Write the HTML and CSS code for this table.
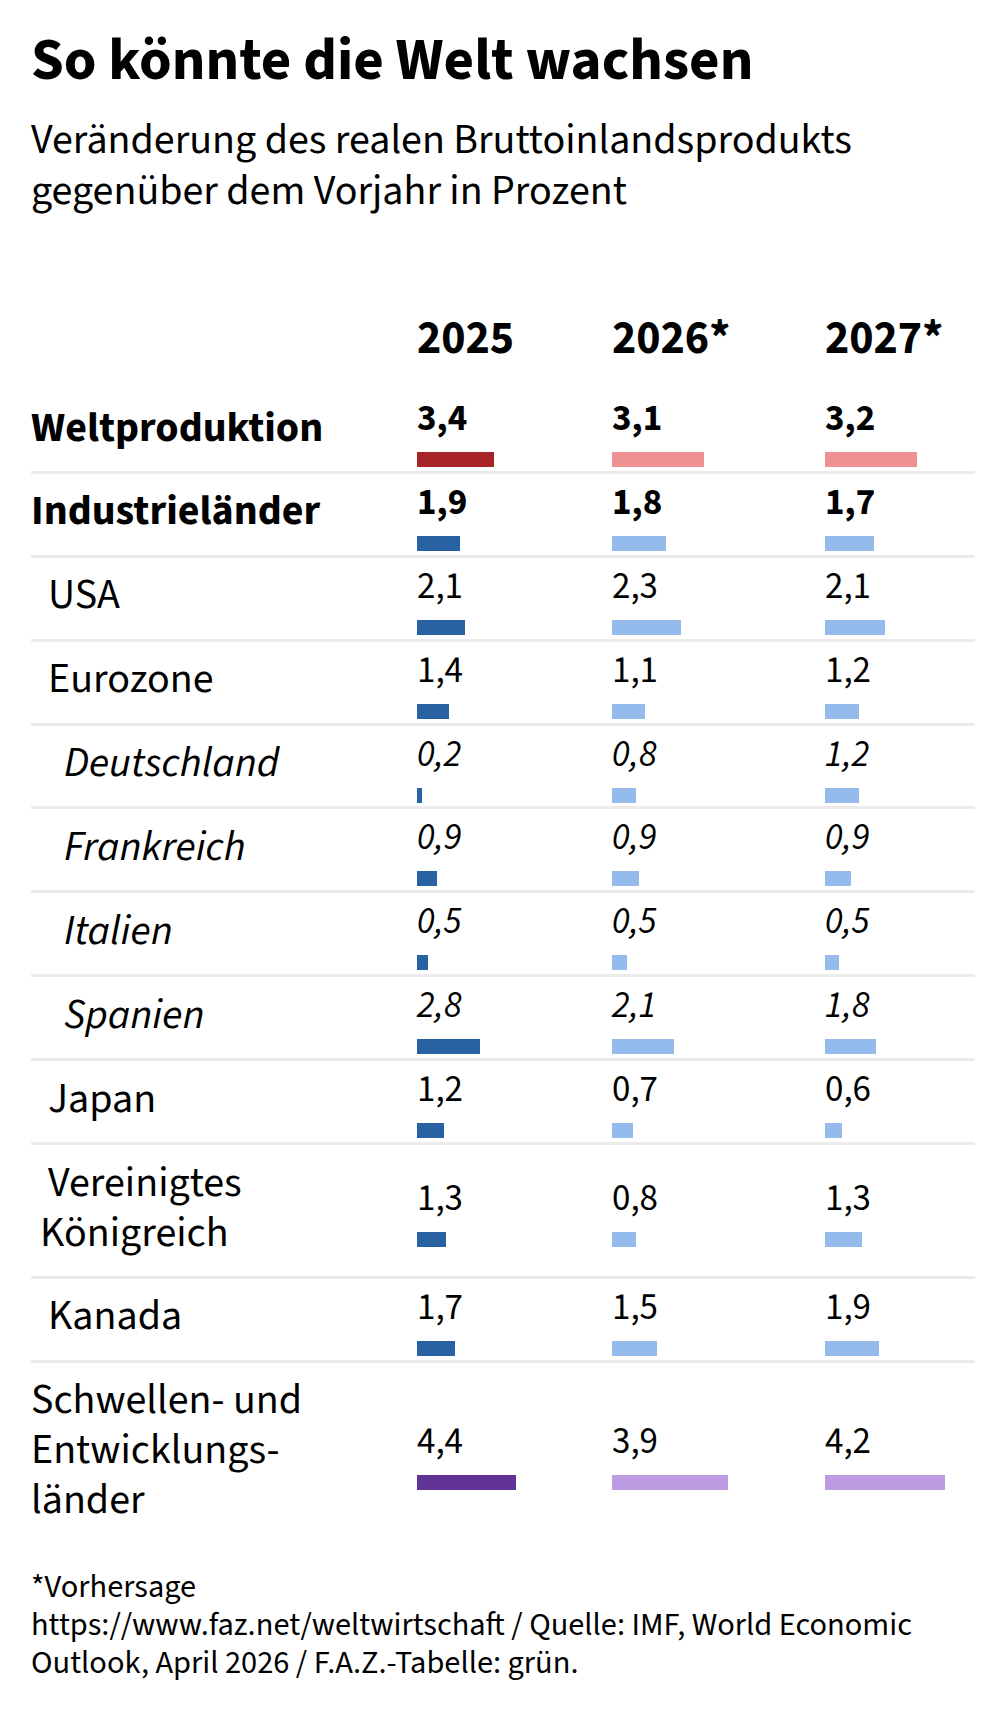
FILE: index.html
```html
<!DOCTYPE html>
<html lang="de">
<head>
<meta charset="utf-8">
<title>So könnte die Welt wachsen</title>
<link rel="stylesheet" href="styles.css">
</head>
<body>
<main class="chart">
  <h1 class="title">So könnte die Welt wachsen</h1>
  <p class="subtitle">Veränderung des realen Bruttoinlandsprodukts gegenüber dem Vorjahr in Prozent</p>

  <div class="table">
    <div class="row head">
      <div class="label"></div>
      <div class="year">2025</div>
      <div class="year">2026*</div>
      <div class="year">2027*</div>
    </div>

    <div class="row bold">
      <div class="label">Weltproduktion</div>
      <div class="val"><div class="num">3,4</div><div class="bar red-d" style="width:77px"></div></div>
      <div class="val"><div class="num">3,1</div><div class="bar red-l" style="width:92px"></div></div>
      <div class="val"><div class="num">3,2</div><div class="bar red-l" style="width:92px"></div></div>
    </div>

    <div class="row bold">
      <div class="label">Industrieländer</div>
      <div class="val"><div class="num">1,9</div><div class="bar blue-d" style="width:43px"></div></div>
      <div class="val"><div class="num">1,8</div><div class="bar blue-l" style="width:54px"></div></div>
      <div class="val"><div class="num">1,7</div><div class="bar blue-l" style="width:49px"></div></div>
    </div>

    <div class="row">
      <div class="label lvl1">USA</div>
      <div class="val"><div class="num">2,1</div><div class="bar blue-d" style="width:48px"></div></div>
      <div class="val"><div class="num">2,3</div><div class="bar blue-l" style="width:69px"></div></div>
      <div class="val"><div class="num">2,1</div><div class="bar blue-l" style="width:60px"></div></div>
    </div>

    <div class="row">
      <div class="label lvl1">Eurozone</div>
      <div class="val"><div class="num">1,4</div><div class="bar blue-d" style="width:32px"></div></div>
      <div class="val"><div class="num">1,1</div><div class="bar blue-l" style="width:33px"></div></div>
      <div class="val"><div class="num">1,2</div><div class="bar blue-l" style="width:34px"></div></div>
    </div>

    <div class="row ital">
      <div class="label lvl2">Deutschland</div>
      <div class="val"><div class="num">0,2</div><div class="bar blue-d" style="width:5px"></div></div>
      <div class="val"><div class="num">0,8</div><div class="bar blue-l" style="width:24px"></div></div>
      <div class="val"><div class="num">1,2</div><div class="bar blue-l" style="width:34px"></div></div>
    </div>

    <div class="row ital">
      <div class="label lvl2">Frankreich</div>
      <div class="val"><div class="num">0,9</div><div class="bar blue-d" style="width:20px"></div></div>
      <div class="val"><div class="num">0,9</div><div class="bar blue-l" style="width:27px"></div></div>
      <div class="val"><div class="num">0,9</div><div class="bar blue-l" style="width:26px"></div></div>
    </div>

    <div class="row ital">
      <div class="label lvl2">Italien</div>
      <div class="val"><div class="num">0,5</div><div class="bar blue-d" style="width:11px"></div></div>
      <div class="val"><div class="num">0,5</div><div class="bar blue-l" style="width:15px"></div></div>
      <div class="val"><div class="num">0,5</div><div class="bar blue-l" style="width:14px"></div></div>
    </div>

    <div class="row ital">
      <div class="label lvl2">Spanien</div>
      <div class="val"><div class="num">2,8</div><div class="bar blue-d" style="width:63px"></div></div>
      <div class="val"><div class="num">2,1</div><div class="bar blue-l" style="width:62px"></div></div>
      <div class="val"><div class="num">1,8</div><div class="bar blue-l" style="width:51px"></div></div>
    </div>

    <div class="row">
      <div class="label lvl1">Japan</div>
      <div class="val"><div class="num">1,2</div><div class="bar blue-d" style="width:27px"></div></div>
      <div class="val"><div class="num">0,7</div><div class="bar blue-l" style="width:21px"></div></div>
      <div class="val"><div class="num">0,6</div><div class="bar blue-l" style="width:17px"></div></div>
    </div>

    <div class="row">
      <div class="label lvl1">Vereinigtes<br>Königreich</div>
      <div class="val"><div class="num">1,3</div><div class="bar blue-d" style="width:29px"></div></div>
      <div class="val"><div class="num">0,8</div><div class="bar blue-l" style="width:24px"></div></div>
      <div class="val"><div class="num">1,3</div><div class="bar blue-l" style="width:37px"></div></div>
    </div>

    <div class="row">
      <div class="label lvl1">Kanada</div>
      <div class="val"><div class="num">1,7</div><div class="bar blue-d" style="width:38px"></div></div>
      <div class="val"><div class="num">1,5</div><div class="bar blue-l" style="width:45px"></div></div>
      <div class="val"><div class="num">1,9</div><div class="bar blue-l" style="width:54px"></div></div>
    </div>

    <div class="row last">
      <div class="label">Schwellen- und<br>Entwicklungs-<br>länder</div>
      <div class="val"><div class="num">4,4</div><div class="bar purple-d" style="width:99px"></div></div>
      <div class="val"><div class="num">3,9</div><div class="bar purple-l" style="width:116px"></div></div>
      <div class="val"><div class="num">4,2</div><div class="bar purple-l" style="width:120px"></div></div>
    </div>
  </div>

  <footer class="notes">
    <div>*Vorhersage</div>
    <div>https://www.faz.net/weltwirtschaft / Quelle: IMF, World Economic Outlook, April 2026 / F.A.Z.-Tabelle: grün.</div>
  </footer>
</main>
</body>
</html>
```

FILE: styles.css
```css
html, body {
  margin: 0;
  padding: 0;
  background: #ffffff;
}

body {
  font-family: "Source Sans Pro", "Source Sans 3", Lato, "Liberation Sans", sans-serif;
  color: #000000;
}

.chart {
  padding: 25px 30px 0 31px;
}

.title {
  margin: 0;
  font-size: 59px;
  line-height: 72px;
  font-weight: 700;
}

.subtitle {
  margin: 18px 0 0;
  font-size: 42px;
  line-height: 51px;
  font-weight: 400;
}

.table {
  margin-top: 96px;
}

.row {
  display: grid;
  grid-template-columns: 386px 195px 213px 1fr;
  border-bottom: 3px solid #ebebeb;
}

.row.head {
  border-bottom: none;
  padding-bottom: 25px;
}

.row.last {
  border-bottom: none;
}

.year {
  font-size: 46px;
  line-height: 52px;
  font-weight: 700;
}

.label {
  align-self: center;
  padding: 12.5px 0 18.4px;
  font-size: 42px;
  line-height: 50px;
}

.bold .label {
  font-weight: 700;
}

.label.lvl1 {
  padding-left: 9px;
  text-indent: 8px;
}

.label.lvl2 {
  padding-left: 9px;
  text-indent: 24px;
  font-style: italic;
}

.val {
  align-self: center;
  padding: 9px 0 3.9px;
}

.num {
  font-size: 37px;
  line-height: 40px;
}

.bold .num {
  font-weight: 700;
}

.ital .num {
  font-style: italic;
}

.bar {
  margin-top: 13px;
  height: 15px;
}

.red-d { background: #a62328; }
.red-l { background: #ef9092; }
.blue-d { background: #2962a3; }
.blue-l { background: #94bbec; }
.purple-d { background: #613394; }
.purple-l { background: #bc9be3; }

.notes {
  margin-top: 24px;
  font-size: 32.4px;
  line-height: 38px;
}
```
